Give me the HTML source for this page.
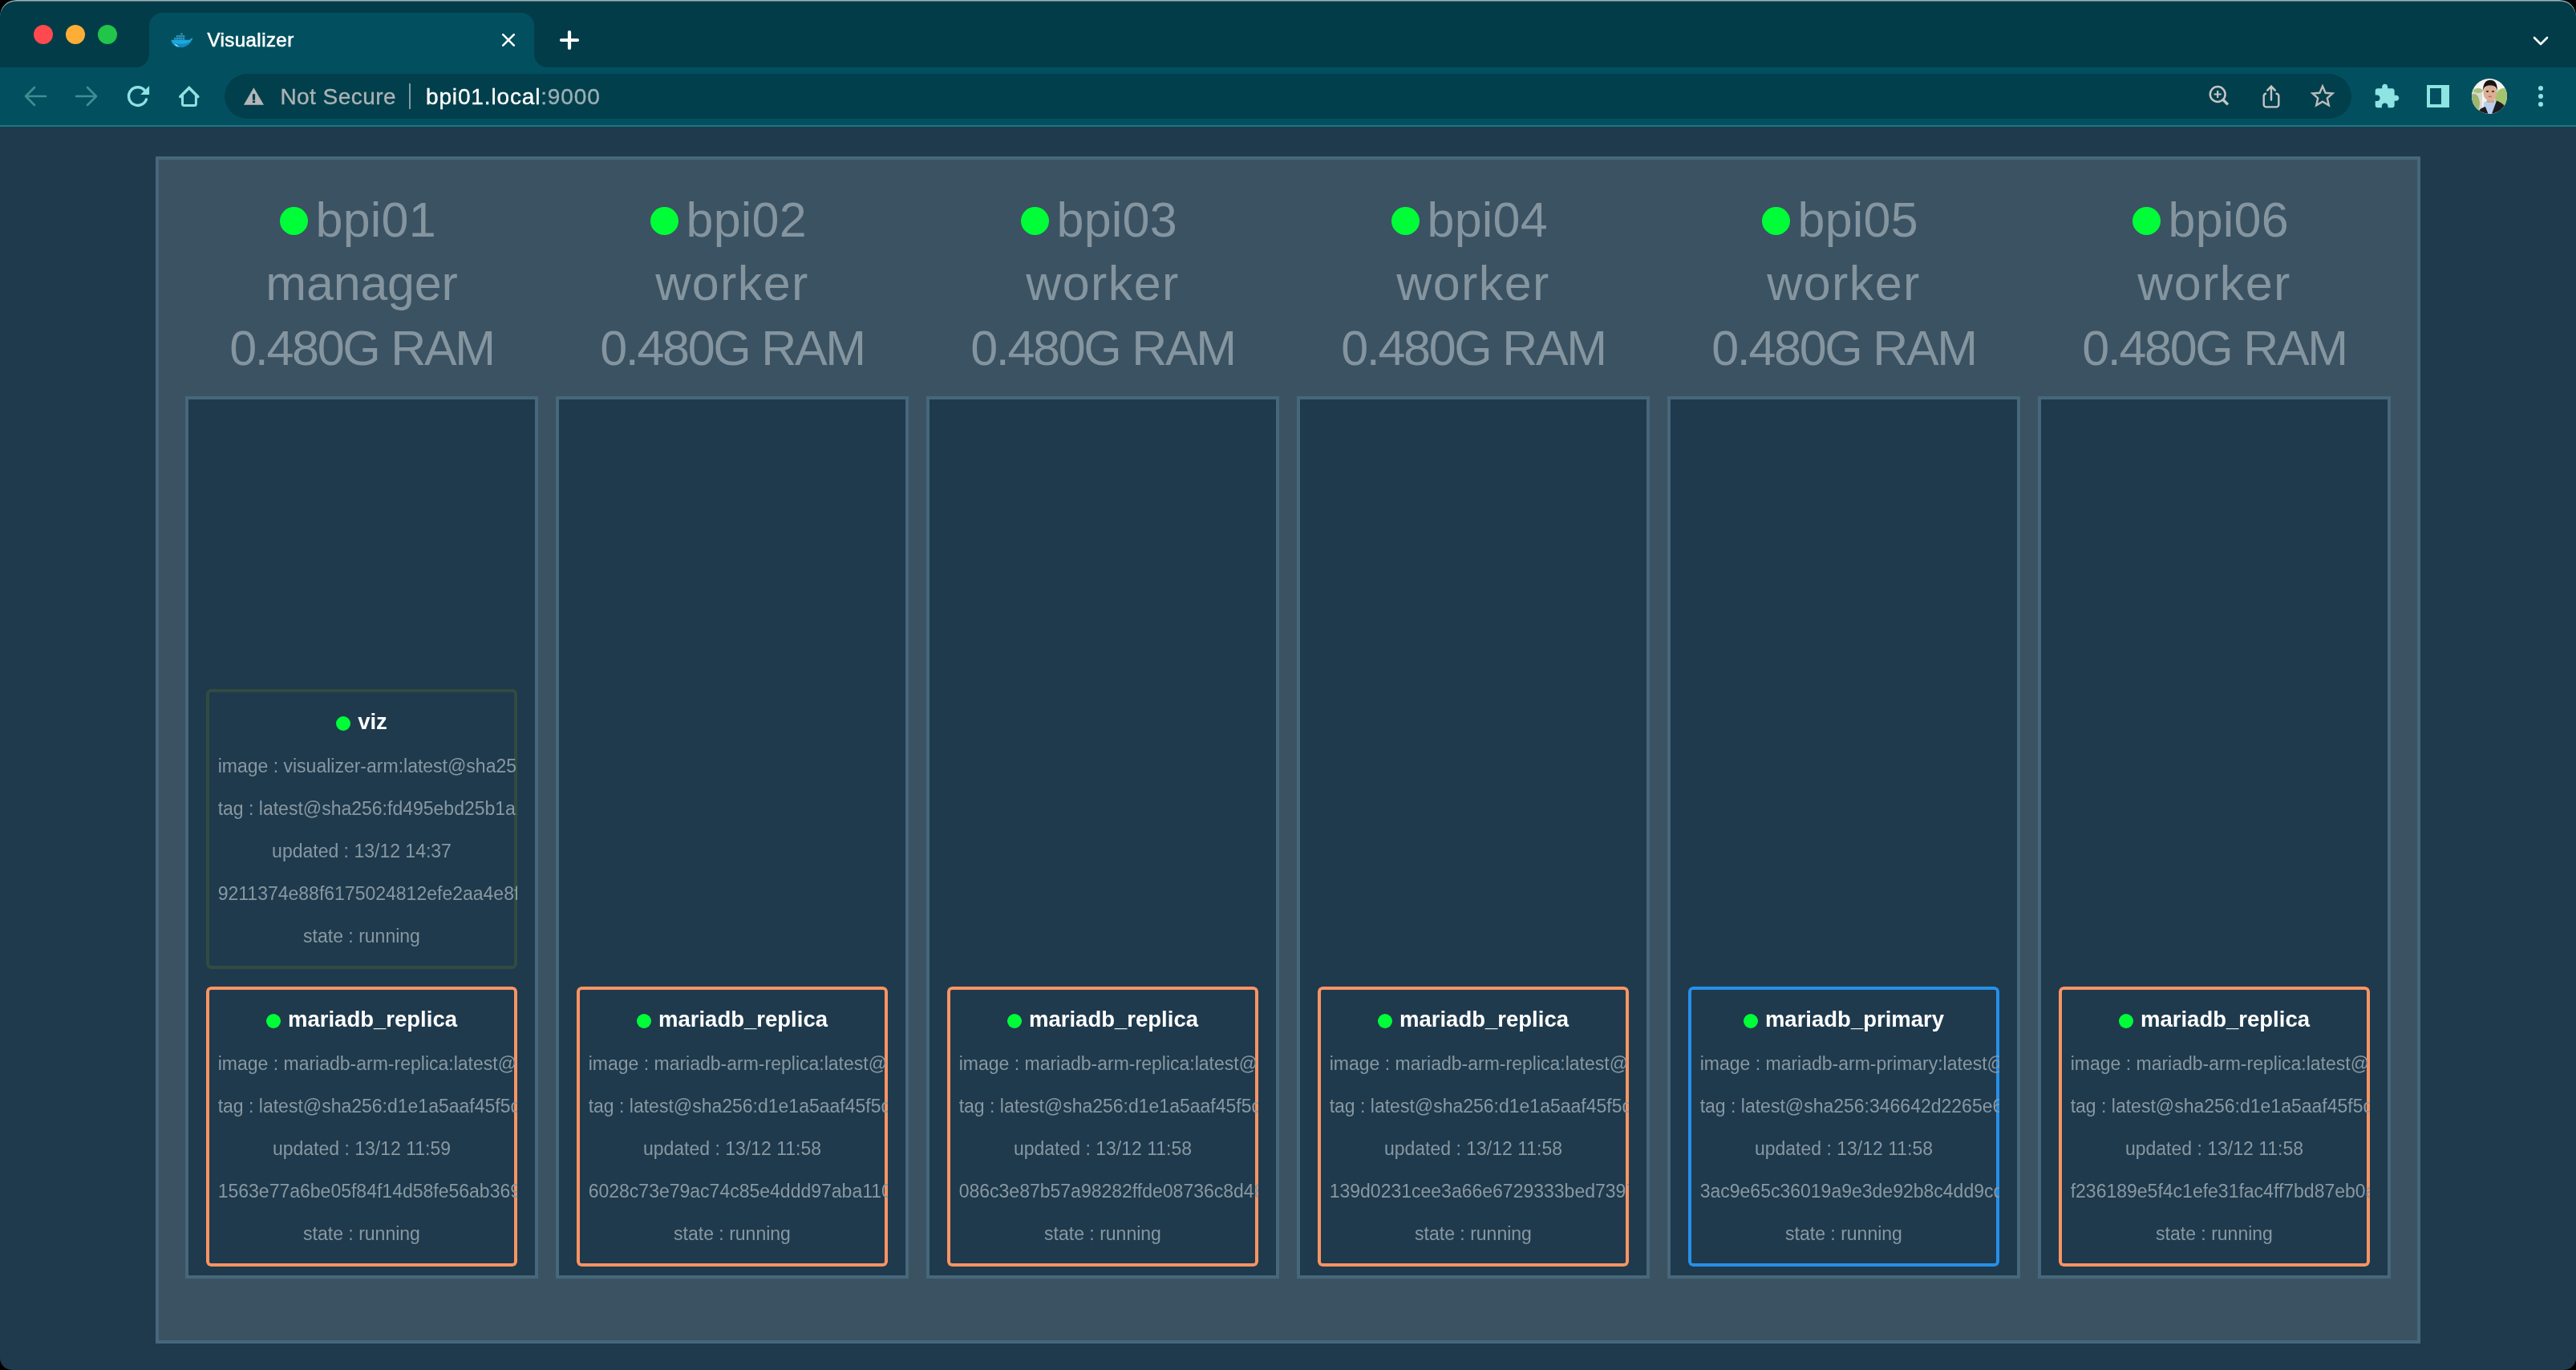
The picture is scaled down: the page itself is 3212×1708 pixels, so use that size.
<!DOCTYPE html>
<html><head><meta charset="utf-8"><title>Visualizer</title>
<style>
html,body{margin:0;padding:0;background:#000;}
body{width:3212px;height:1708px;overflow:hidden;position:relative;font-family:"Liberation Sans", sans-serif;}
</style></head><body>
<div style="position:absolute;left:0;top:0;width:3212px;height:1708px;will-change:transform">
<div style="position:absolute;left:0;top:0;width:3212px;height:84px;background:#023c49"></div>
<div style="position:absolute;left:42px;top:31px;width:24px;height:24px;border-radius:50%;background:#fe4a4f"></div>
<div style="position:absolute;left:82px;top:31px;width:24px;height:24px;border-radius:50%;background:#feae36"></div>
<div style="position:absolute;left:122px;top:31px;width:24px;height:24px;border-radius:50%;background:#20c54a"></div>
<div style="position:absolute;left:186px;top:15.5px;width:480px;height:70px;background:#02505f;border-radius:16px 16px 0 0"></div>
<div style="position:absolute;left:170px;top:68px;width:16px;height:16px;background:radial-gradient(circle at 0 0, #023c49 15.5px, #02505f 16px)"></div>
<div style="position:absolute;left:666px;top:68px;width:16px;height:16px;background:radial-gradient(circle at 100% 0, #023c49 15.5px, #02505f 16px)"></div>
<svg style="position:absolute;left:210px;top:40px" width="32" height="20" viewBox="0 0 32 20">
<g fill="#2f97bd"><rect x="15.2" y="1.3" width="2.4" height="2.2"/>
<rect x="9.8" y="4" width="2.4" height="2.4"/><rect x="12.5" y="4" width="2.4" height="2.4"/><rect x="15.2" y="4" width="2.4" height="2.4"/><rect x="17.9" y="4" width="2.4" height="2.4"/>
<rect x="7.1" y="6.9" width="2.4" height="2.6"/><rect x="9.8" y="6.9" width="2.4" height="2.6"/><rect x="12.5" y="6.9" width="2.4" height="2.6"/><rect x="15.2" y="6.9" width="2.4" height="2.6"/><rect x="17.9" y="6.9" width="2.4" height="2.6"/></g>
<path d="M3.5 9.8 H26.5 C27.5 8.6 28.8 7.2 29.6 7.6 C30.4 8 30.2 9.4 28.8 10.2 C26.8 15.2 21.5 19 14 19 C8.5 19 4.5 15 3.5 9.8 Z" fill="#19a9e0"/>
<path d="M5 13.5 C8 17 11 18.8 14 19 C21.5 19 26.8 15.2 28.8 10.2 C25 14.5 18 16 5 13.5Z" fill="#1389bd"/>
<path d="M7 14.3 C8.8 16.6 10.8 17.9 13 18.2 C11.3 16.7 9.3 15.5 7 14.3 Z" fill="#ffffff"/></svg>
<div style="position:absolute;left:258.5px;top:37.68px;font-size:24px;line-height:24px;color:#ffffff;font-weight:normal;white-space:nowrap;letter-spacing:0.45px;-webkit-text-stroke:0.6px #fff">Visualizer</div>
<svg style="position:absolute;left:623px;top:40px" width="22" height="20" viewBox="0 0 22 20"><path d="M4.2 3.1 L17.8 16.7 M17.8 3.1 L4.2 16.7" stroke="#fff" stroke-width="2.6" stroke-linecap="round"/></svg>
<svg style="position:absolute;left:697px;top:37px" width="26" height="26" viewBox="0 0 26 26"><path d="M13 3 V23 M3 13 H23" stroke="#fff" stroke-width="4.2" stroke-linecap="round"/></svg>
<svg style="position:absolute;left:3158px;top:44px" width="20" height="14" viewBox="0 0 20 14"><path d="M2 3 L10 11 L18 3" stroke="#fff" stroke-width="2.6" fill="none" stroke-linecap="round" stroke-linejoin="round"/></svg>
<div style="position:absolute;left:0;top:84px;width:3212px;height:72px;background:#02505f"></div>
<div style="position:absolute;left:0;top:156px;width:3212px;height:2px;background:#1d7883"></div>
<div style="position:absolute;left:280px;top:92px;width:2652px;height:56px;border-radius:28px;background:#023f4c"></div>
<svg style="position:absolute;left:28px;top:104px" width="32" height="32" viewBox="0 0 32 32"><path d="M29 16 H5 M15 5 L4 16 L15 27" stroke="#3f8e95" stroke-width="2.6" fill="none" stroke-linecap="round" stroke-linejoin="round"/></svg>
<svg style="position:absolute;left:92px;top:104px" width="32" height="32" viewBox="0 0 32 32"><path d="M3 16 H27 M17 5 L28 16 L17 27" stroke="#3f8e95" stroke-width="2.6" fill="none" stroke-linecap="round" stroke-linejoin="round"/></svg>
<svg style="position:absolute;left:156px;top:104px" width="32" height="32" viewBox="0 0 32 32"><path d="M24.46 8.84 A11.3 11.3 0 1 0 26.42 19.96" stroke="#8ee3e3" stroke-width="3.4" fill="none" stroke-linecap="round"/><path d="M30.1 3 L30.1 13.9 L19.2 13.9 Z" fill="#8ee3e3"/></svg>
<svg style="position:absolute;left:220px;top:104px" width="32" height="32" viewBox="0 0 32 32"><path d="M4.8 16.4 L15.8 5.4 L26.8 16.4" stroke="#8ee3e3" stroke-width="3.5" fill="none" stroke-linecap="round" stroke-linejoin="miter"/><path d="M7.5 13 V25.4 Q7.5 27.4 9.5 27.4 H22.4 Q24.4 27.4 24.4 25.4 V13" stroke="#8ee3e3" stroke-width="3" fill="none"/></svg>
<svg style="position:absolute;left:303px;top:108px" width="27" height="24" viewBox="0 0 27 24"><path d="M13.4 1.3 L26 22.8 H0.9 Z" fill="#b4b6b8"/><rect x="11.9" y="9.2" width="3.2" height="7.5" fill="#023f4c"/><rect x="11.9" y="17.6" width="3.2" height="2.6" fill="#023f4c"/></svg>
<div style="position:absolute;left:349.4px;top:106.70px;font-size:28px;line-height:28px;color:#abb2b5;font-weight:normal;white-space:nowrap;letter-spacing:0.45px;-webkit-text-stroke:0.35px #abb2b5">Not Secure</div>
<div style="position:absolute;left:510px;top:104px;width:2px;height:32px;background:#7f9ba1"></div>
<div style="position:absolute;left:531px;top:106.50px;font-size:28px;line-height:28px;color:#9bb0b4;font-weight:normal;white-space:nowrap;letter-spacing:0.85px;-webkit-text-stroke:0.35px currentColor"><span style="color:#ffffff">bpi01.local</span>:9000</div>
<svg style="position:absolute;left:2752px;top:104px" width="32" height="32" viewBox="0 0 32 32"><circle cx="13.2" cy="13.5" r="9.4" stroke="#c6c6c6" stroke-width="2.5" fill="none"/><path d="M13.2 9 V18 M8.7 13.5 H17.7" stroke="#c6c6c6" stroke-width="2.2"/><path d="M19.8 20.2 L26 26.4" stroke="#c6c6c6" stroke-width="3.4"/></svg>
<svg style="position:absolute;left:2816px;top:104px" width="32" height="32" viewBox="0 0 32 32"><path d="M10 12.8 H9.7 A3 3 0 0 0 6.7 15.8 V26.4 A3 3 0 0 0 9.7 29.4 H22.3 A3 3 0 0 0 25.3 26.4 V15.8 A3 3 0 0 0 22.3 12.8 H21.5" stroke="#c6c6c6" stroke-width="2.4" fill="none"/><path d="M16 20.5 V3.5 M11.2 8.6 L16 3.6 L20.8 8.6" stroke="#c6c6c6" stroke-width="2.4" fill="none" stroke-linecap="round" stroke-linejoin="round"/></svg>
<svg style="position:absolute;left:2880px;top:104px" width="32" height="32" viewBox="0 0 32 32"><path d="M16 3.5 L19.6 11.8 L28.5 12.5 L21.8 18.4 L23.8 27.3 L16 22.6 L8.2 27.3 L10.2 18.4 L3.5 12.5 L12.4 11.8 Z" stroke="#bcbcbc" stroke-width="2.4" fill="none" stroke-linejoin="miter"/></svg>
<svg style="position:absolute;left:2961px;top:104px" width="31" height="31" viewBox="1.5 0.5 22 22"><path d="M20.5 11H19V7c0-1.1-.9-2-2-2h-4V3.5C13 2.12 11.88 1 10.5 1S8 2.12 8 3.5V5H4c-1.1 0-1.99.9-1.99 2v3.8H3.5c1.490 0 2.7 1.21 2.7 2.7s-1.21 2.7-2.7 2.7H2V20c0 1.1.9 2 2 2h3.8v-1.5c0-1.49 1.21-2.7 2.7-2.7 1.49 0 2.7 1.21 2.7 2.7V22H17c1.1 0 2-.9 2-2v-4h1.5c1.38 0 2.5-1.12 2.5-2.5S21.88 11 20.5 11z" fill="#8ee3e3"/></svg>
<svg style="position:absolute;left:3026px;top:106px" width="28" height="28" viewBox="0 0 28 28"><rect x="0" y="0" width="28" height="28" fill="#8ee3e3"/><rect x="4" y="4" width="14" height="20" fill="#02505f"/></svg>
<svg style="position:absolute;left:3082px;top:98px" width="44" height="44" viewBox="0 0 44 44"><defs><clipPath id="av"><circle cx="22" cy="22" r="22"/></clipPath></defs>
<g clip-path="url(#av)"><rect width="44" height="44" fill="#f4f4f0"/><rect x="0" y="13" width="13" height="26" fill="#d9d9d4"/>
<ellipse cx="3" cy="31" rx="7" ry="12" fill="#9db56c"/><ellipse cx="8" cy="15" rx="6" ry="3" fill="#a9c27a"/><ellipse cx="40" cy="25" rx="11" ry="13" fill="#a5c46e"/>
<path d="M14 44 L15 30 C18 27 22 26 25 26 C28 26 31 28 32 30 L33 44 Z" fill="#b8d0ec"/>
<path d="M25 44 L31 27.5 C35 29 38.5 31 41 34 L44 44 Z" fill="#1c1b20"/>
<path d="M8 44 L10 38.5 C12 37 14 36 17 35 L20.5 44 Z" fill="#1c1b20"/>
<rect x="19" y="23" width="9" height="7" fill="#d3a48c"/>
<ellipse cx="23" cy="18" rx="8.5" ry="10" fill="#dcae96"/>
<path d="M14.3 16 C13.5 6 18 1.8 23 1.8 C28.5 1.8 32.5 6 31.7 16 C31 10.5 28.5 8.5 23 8.5 C17.5 8.5 15 10.5 14.3 16 Z" fill="#171414"/>
<ellipse cx="19.5" cy="16" rx="1.7" ry="0.9" fill="#3a2520"/><ellipse cx="26.5" cy="16" rx="1.7" ry="0.9" fill="#3a2520"/><ellipse cx="22.8" cy="22.4" rx="2.3" ry="0.8" fill="#b27462"/></g></svg>
<div style="position:absolute;left:3165px;top:107px;width:6px;height:6px;border-radius:50%;background:#8ee3e3"></div>
<div style="position:absolute;left:3165px;top:117px;width:6px;height:6px;border-radius:50%;background:#8ee3e3"></div>
<div style="position:absolute;left:3165px;top:127px;width:6px;height:6px;border-radius:50%;background:#8ee3e3"></div>
<div style="position:absolute;left:0;top:158px;width:3212px;height:1550px;background:#1f3a4d"></div>
<div style="position:absolute;left:194px;top:195px;width:2816px;height:1472px;border:4px solid #47677b;background:#3b5263"></div>
<div style="position:absolute;left:348.5px;top:258px;width:35px;height:35px;border-radius:50%;background:#00fe38"></div>
<div style="position:absolute;left:393.5px;top:243.86px;font-size:61px;line-height:61px;color:#84959f;font-weight:normal;white-space:nowrap;letter-spacing:0.2px">bpi01</div>
<div style="position:absolute;left:-549px;width:2000px;text-align:center;top:323.36px;font-size:61px;line-height:61px;color:#84959f;font-weight:normal;white-space:nowrap;letter-spacing:-0.2px">manager</div>
<div style="position:absolute;left:-549px;width:2000px;text-align:center;top:403.66px;font-size:61px;line-height:61px;color:#84959f;font-weight:normal;white-space:nowrap;letter-spacing:-2.3px">0.480G RAM</div>
<div style="position:absolute;left:231px;top:494px;width:432px;height:1092px;border:4px solid #47677b;background:#1f3a4d"></div>
<div style="position:absolute;left:257px;top:859px;width:380px;height:341px;border:4px solid #324b41;border-radius:6px;clip-path:inset(0 round 6px)">
<div style="position:absolute;left:0;top:23.42px;width:380px;text-align:center;font-size:27.5px;line-height:27.5px;font-weight:bold;color:#fff;white-space:nowrap"><span style="display:inline-block;width:18px;height:18px;border-radius:50%;background:#00fe38;margin-right:9px;vertical-align:-1.5px"></span>viz</div>
<div style="position:absolute;left:10.7px;top:80.93px;font-size:23px;line-height:23px;color:#8898a2;white-space:nowrap">image : visualizer-arm:latest@sha256:fd495ebd25b1a1c3</div>
<div style="position:absolute;left:10.7px;top:134.03px;font-size:23px;line-height:23px;color:#8898a2;white-space:nowrap">tag : latest@sha256:fd495ebd25b1a1c3b2</div>
<div style="position:absolute;left:-4px;width:388px;text-align:center;top:187.23px;font-size:23px;line-height:23px;color:#8898a2;white-space:nowrap">updated : 13/12 14:37</div>
<div style="position:absolute;left:10.7px;top:240.23px;font-size:23px;line-height:23px;color:#8898a2;white-space:nowrap">9211374e88f6175024812efe2aa4e8f1c2</div>
<div style="position:absolute;left:-4px;width:388px;text-align:center;top:293.23px;font-size:23px;line-height:23px;color:#8898a2;white-space:nowrap">state : running</div>
</div>
<div style="position:absolute;left:257px;top:1230px;width:380px;height:341px;border:4px solid #fa9462;border-radius:6px;clip-path:inset(0 round 6px)">
<div style="position:absolute;left:0;top:23.42px;width:380px;text-align:center;font-size:27.5px;line-height:27.5px;font-weight:bold;color:#fff;white-space:nowrap"><span style="display:inline-block;width:18px;height:18px;border-radius:50%;background:#00fe38;margin-right:9px;vertical-align:-1.5px"></span>mariadb_replica</div>
<div style="position:absolute;left:10.7px;top:80.93px;font-size:23px;line-height:23px;color:#8898a2;white-space:nowrap">image : mariadb-arm-replica:latest@sha</div>
<div style="position:absolute;left:10.7px;top:134.03px;font-size:23px;line-height:23px;color:#8898a2;white-space:nowrap">tag : latest@sha256:d1e1a5aaf45f5d2a</div>
<div style="position:absolute;left:-4px;width:388px;text-align:center;top:187.23px;font-size:23px;line-height:23px;color:#8898a2;white-space:nowrap">updated : 13/12 11:59</div>
<div style="position:absolute;left:10.7px;top:240.23px;font-size:23px;line-height:23px;color:#8898a2;white-space:nowrap">1563e77a6be05f84f14d58fe56ab3691a</div>
<div style="position:absolute;left:-4px;width:388px;text-align:center;top:293.23px;font-size:23px;line-height:23px;color:#8898a2;white-space:nowrap">state : running</div>
</div>
<div style="position:absolute;left:810.5px;top:258px;width:35px;height:35px;border-radius:50%;background:#00fe38"></div>
<div style="position:absolute;left:855.5px;top:243.86px;font-size:61px;line-height:61px;color:#84959f;font-weight:normal;white-space:nowrap;letter-spacing:0.2px">bpi02</div>
<div style="position:absolute;left:-87px;width:2000px;text-align:center;top:323.36px;font-size:61px;line-height:61px;color:#84959f;font-weight:normal;white-space:nowrap;letter-spacing:1.4px">worker</div>
<div style="position:absolute;left:-87px;width:2000px;text-align:center;top:403.66px;font-size:61px;line-height:61px;color:#84959f;font-weight:normal;white-space:nowrap;letter-spacing:-2.3px">0.480G RAM</div>
<div style="position:absolute;left:693px;top:494px;width:432px;height:1092px;border:4px solid #47677b;background:#1f3a4d"></div>
<div style="position:absolute;left:719px;top:1230px;width:380px;height:341px;border:4px solid #fa9462;border-radius:6px;clip-path:inset(0 round 6px)">
<div style="position:absolute;left:0;top:23.42px;width:380px;text-align:center;font-size:27.5px;line-height:27.5px;font-weight:bold;color:#fff;white-space:nowrap"><span style="display:inline-block;width:18px;height:18px;border-radius:50%;background:#00fe38;margin-right:9px;vertical-align:-1.5px"></span>mariadb_replica</div>
<div style="position:absolute;left:10.7px;top:80.93px;font-size:23px;line-height:23px;color:#8898a2;white-space:nowrap">image : mariadb-arm-replica:latest@sha</div>
<div style="position:absolute;left:10.7px;top:134.03px;font-size:23px;line-height:23px;color:#8898a2;white-space:nowrap">tag : latest@sha256:d1e1a5aaf45f5d2a</div>
<div style="position:absolute;left:-4px;width:388px;text-align:center;top:187.23px;font-size:23px;line-height:23px;color:#8898a2;white-space:nowrap">updated : 13/12 11:58</div>
<div style="position:absolute;left:10.7px;top:240.23px;font-size:23px;line-height:23px;color:#8898a2;white-space:nowrap">6028c73e79ac74c85e4ddd97aba110a3</div>
<div style="position:absolute;left:-4px;width:388px;text-align:center;top:293.23px;font-size:23px;line-height:23px;color:#8898a2;white-space:nowrap">state : running</div>
</div>
<div style="position:absolute;left:1272.5px;top:258px;width:35px;height:35px;border-radius:50%;background:#00fe38"></div>
<div style="position:absolute;left:1317.5px;top:243.86px;font-size:61px;line-height:61px;color:#84959f;font-weight:normal;white-space:nowrap;letter-spacing:0.2px">bpi03</div>
<div style="position:absolute;left:375px;width:2000px;text-align:center;top:323.36px;font-size:61px;line-height:61px;color:#84959f;font-weight:normal;white-space:nowrap;letter-spacing:1.4px">worker</div>
<div style="position:absolute;left:375px;width:2000px;text-align:center;top:403.66px;font-size:61px;line-height:61px;color:#84959f;font-weight:normal;white-space:nowrap;letter-spacing:-2.3px">0.480G RAM</div>
<div style="position:absolute;left:1155px;top:494px;width:432px;height:1092px;border:4px solid #47677b;background:#1f3a4d"></div>
<div style="position:absolute;left:1181px;top:1230px;width:380px;height:341px;border:4px solid #fa9462;border-radius:6px;clip-path:inset(0 round 6px)">
<div style="position:absolute;left:0;top:23.42px;width:380px;text-align:center;font-size:27.5px;line-height:27.5px;font-weight:bold;color:#fff;white-space:nowrap"><span style="display:inline-block;width:18px;height:18px;border-radius:50%;background:#00fe38;margin-right:9px;vertical-align:-1.5px"></span>mariadb_replica</div>
<div style="position:absolute;left:10.7px;top:80.93px;font-size:23px;line-height:23px;color:#8898a2;white-space:nowrap">image : mariadb-arm-replica:latest@sha</div>
<div style="position:absolute;left:10.7px;top:134.03px;font-size:23px;line-height:23px;color:#8898a2;white-space:nowrap">tag : latest@sha256:d1e1a5aaf45f5d2a</div>
<div style="position:absolute;left:-4px;width:388px;text-align:center;top:187.23px;font-size:23px;line-height:23px;color:#8898a2;white-space:nowrap">updated : 13/12 11:58</div>
<div style="position:absolute;left:10.7px;top:240.23px;font-size:23px;line-height:23px;color:#8898a2;white-space:nowrap">086c3e87b57a98282ffde08736c8d48a</div>
<div style="position:absolute;left:-4px;width:388px;text-align:center;top:293.23px;font-size:23px;line-height:23px;color:#8898a2;white-space:nowrap">state : running</div>
</div>
<div style="position:absolute;left:1734.5px;top:258px;width:35px;height:35px;border-radius:50%;background:#00fe38"></div>
<div style="position:absolute;left:1779.5px;top:243.86px;font-size:61px;line-height:61px;color:#84959f;font-weight:normal;white-space:nowrap;letter-spacing:0.2px">bpi04</div>
<div style="position:absolute;left:837px;width:2000px;text-align:center;top:323.36px;font-size:61px;line-height:61px;color:#84959f;font-weight:normal;white-space:nowrap;letter-spacing:1.4px">worker</div>
<div style="position:absolute;left:837px;width:2000px;text-align:center;top:403.66px;font-size:61px;line-height:61px;color:#84959f;font-weight:normal;white-space:nowrap;letter-spacing:-2.3px">0.480G RAM</div>
<div style="position:absolute;left:1617px;top:494px;width:432px;height:1092px;border:4px solid #47677b;background:#1f3a4d"></div>
<div style="position:absolute;left:1643px;top:1230px;width:380px;height:341px;border:4px solid #fa9462;border-radius:6px;clip-path:inset(0 round 6px)">
<div style="position:absolute;left:0;top:23.42px;width:380px;text-align:center;font-size:27.5px;line-height:27.5px;font-weight:bold;color:#fff;white-space:nowrap"><span style="display:inline-block;width:18px;height:18px;border-radius:50%;background:#00fe38;margin-right:9px;vertical-align:-1.5px"></span>mariadb_replica</div>
<div style="position:absolute;left:10.7px;top:80.93px;font-size:23px;line-height:23px;color:#8898a2;white-space:nowrap">image : mariadb-arm-replica:latest@sha</div>
<div style="position:absolute;left:10.7px;top:134.03px;font-size:23px;line-height:23px;color:#8898a2;white-space:nowrap">tag : latest@sha256:d1e1a5aaf45f5d2a</div>
<div style="position:absolute;left:-4px;width:388px;text-align:center;top:187.23px;font-size:23px;line-height:23px;color:#8898a2;white-space:nowrap">updated : 13/12 11:58</div>
<div style="position:absolute;left:10.7px;top:240.23px;font-size:23px;line-height:23px;color:#8898a2;white-space:nowrap">139d0231cee3a66e6729333bed7397a1</div>
<div style="position:absolute;left:-4px;width:388px;text-align:center;top:293.23px;font-size:23px;line-height:23px;color:#8898a2;white-space:nowrap">state : running</div>
</div>
<div style="position:absolute;left:2196.5px;top:258px;width:35px;height:35px;border-radius:50%;background:#00fe38"></div>
<div style="position:absolute;left:2241.5px;top:243.86px;font-size:61px;line-height:61px;color:#84959f;font-weight:normal;white-space:nowrap;letter-spacing:0.2px">bpi05</div>
<div style="position:absolute;left:1299px;width:2000px;text-align:center;top:323.36px;font-size:61px;line-height:61px;color:#84959f;font-weight:normal;white-space:nowrap;letter-spacing:1.4px">worker</div>
<div style="position:absolute;left:1299px;width:2000px;text-align:center;top:403.66px;font-size:61px;line-height:61px;color:#84959f;font-weight:normal;white-space:nowrap;letter-spacing:-2.3px">0.480G RAM</div>
<div style="position:absolute;left:2079px;top:494px;width:432px;height:1092px;border:4px solid #47677b;background:#1f3a4d"></div>
<div style="position:absolute;left:2105px;top:1230px;width:380px;height:341px;border:4px solid #2690e9;border-radius:6px;clip-path:inset(0 round 6px)">
<div style="position:absolute;left:0;top:23.42px;width:380px;text-align:center;font-size:27.5px;line-height:27.5px;font-weight:bold;color:#fff;white-space:nowrap"><span style="display:inline-block;width:18px;height:18px;border-radius:50%;background:#00fe38;margin-right:9px;vertical-align:-1.5px"></span>mariadb_primary</div>
<div style="position:absolute;left:10.7px;top:80.93px;font-size:23px;line-height:23px;color:#8898a2;white-space:nowrap">image : mariadb-arm-primary:latest@sha</div>
<div style="position:absolute;left:10.7px;top:134.03px;font-size:23px;line-height:23px;color:#8898a2;white-space:nowrap">tag : latest@sha256:346642d2265e6a1b</div>
<div style="position:absolute;left:-4px;width:388px;text-align:center;top:187.23px;font-size:23px;line-height:23px;color:#8898a2;white-space:nowrap">updated : 13/12 11:58</div>
<div style="position:absolute;left:10.7px;top:240.23px;font-size:23px;line-height:23px;color:#8898a2;white-space:nowrap">3ac9e65c36019a9e3de92b8c4dd9cd3a</div>
<div style="position:absolute;left:-4px;width:388px;text-align:center;top:293.23px;font-size:23px;line-height:23px;color:#8898a2;white-space:nowrap">state : running</div>
</div>
<div style="position:absolute;left:2658.5px;top:258px;width:35px;height:35px;border-radius:50%;background:#00fe38"></div>
<div style="position:absolute;left:2703.5px;top:243.86px;font-size:61px;line-height:61px;color:#84959f;font-weight:normal;white-space:nowrap;letter-spacing:0.2px">bpi06</div>
<div style="position:absolute;left:1761px;width:2000px;text-align:center;top:323.36px;font-size:61px;line-height:61px;color:#84959f;font-weight:normal;white-space:nowrap;letter-spacing:1.4px">worker</div>
<div style="position:absolute;left:1761px;width:2000px;text-align:center;top:403.66px;font-size:61px;line-height:61px;color:#84959f;font-weight:normal;white-space:nowrap;letter-spacing:-2.3px">0.480G RAM</div>
<div style="position:absolute;left:2541px;top:494px;width:432px;height:1092px;border:4px solid #47677b;background:#1f3a4d"></div>
<div style="position:absolute;left:2567px;top:1230px;width:380px;height:341px;border:4px solid #fa9462;border-radius:6px;clip-path:inset(0 round 6px)">
<div style="position:absolute;left:0;top:23.42px;width:380px;text-align:center;font-size:27.5px;line-height:27.5px;font-weight:bold;color:#fff;white-space:nowrap"><span style="display:inline-block;width:18px;height:18px;border-radius:50%;background:#00fe38;margin-right:9px;vertical-align:-1.5px"></span>mariadb_replica</div>
<div style="position:absolute;left:10.7px;top:80.93px;font-size:23px;line-height:23px;color:#8898a2;white-space:nowrap">image : mariadb-arm-replica:latest@sha</div>
<div style="position:absolute;left:10.7px;top:134.03px;font-size:23px;line-height:23px;color:#8898a2;white-space:nowrap">tag : latest@sha256:d1e1a5aaf45f5d2a</div>
<div style="position:absolute;left:-4px;width:388px;text-align:center;top:187.23px;font-size:23px;line-height:23px;color:#8898a2;white-space:nowrap">updated : 13/12 11:58</div>
<div style="position:absolute;left:10.7px;top:240.23px;font-size:23px;line-height:23px;color:#8898a2;white-space:nowrap">f236189e5f4c1efe31fac4ff7bd87eb0a1</div>
<div style="position:absolute;left:-4px;width:388px;text-align:center;top:293.23px;font-size:23px;line-height:23px;color:#8898a2;white-space:nowrap">state : running</div>
</div>
<div style="position:absolute;left:0;top:0;width:3212px;height:60px;border-radius:20px 20px 0 0;box-shadow:inset 0 1.5px 0 #9fb3b6"></div>
<div style="position:absolute;left:0;top:0;width:3212px;height:1708px;border-radius:20px 20px 15px 15px;box-shadow:0 0 0 40px #000"></div>
</div>
</body></html>
